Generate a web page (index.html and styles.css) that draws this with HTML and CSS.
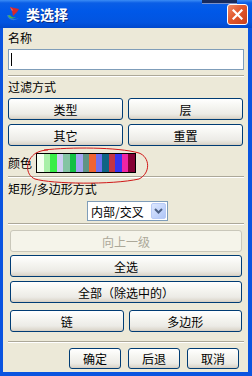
FILE: index.html
```html
<!DOCTYPE html>
<html lang="zh-CN">
<head>
    <meta charset="UTF-8">
    <title>类选择</title>
    <link rel="stylesheet" href="styles.css">
</head>
<body>
    <div class="window">
        <header class="titlebar">
            <svg class="app-icon" width="16" height="16" viewBox="0 0 16 16">
                <path d="M2 9 C3 14, 9 16, 14 12 C10 14, 5 13, 4 9 Z" fill="#2f7ad8"/>
                <path d="M3 10 C5 13, 9 13, 11 11 C8 12, 6 11, 5 9 Z" fill="#49b84a"/>
                <path d="M5 1 L14 3 L12 6 L8 10 L7 5 Z" fill="#d8282a"/>
                <path d="M5 1 L8 4 L7 5 Z" fill="#f07070"/>
            </svg>
            <span class="title-text">类选择</span>
            <span class="behind-strip"></span>
            <span class="close-btn">
                <svg width="11" height="11" viewBox="0 0 11 11">
                    <path d="M1.5 1.5 L9.5 9.5 M9.5 1.5 L1.5 9.5" stroke="#fff" stroke-width="2.2" stroke-linecap="square"/>
                </svg>
            </span>
        </header>
        <main class="dialog">
            <div class="label label-name">名称</div>
            <div class="text-input"><span class="caret"></span></div>
            <div class="sep sep-1"></div>

            <div class="label label-filter">过滤方式</div>
            <div class="btn-grid">
                <button class="btn">类型</button>
                <button class="btn">层</button>
                <button class="btn">其它</button>
                <button class="btn">重置</button>
            </div>
            <div class="color-row">
                <span class="label">颜色</span>
                <div class="color-strip">
                    <span style="background:#f4fff0"></span>
                    <span style="background:#a8f0a8"></span>
                    <span style="background:#38ee48"></span>
                    <span style="background:#cdcdf2"></span>
                    <span style="background:#84c4a4"></span>
                    <span style="background:#14c044"></span>
                    <span style="background:#a4a4f0"></span>
                    <span style="background:#609484"></span>
                    <span style="background:#f06434"></span>
                    <span style="background:#7070f0"></span>
                    <span style="background:#106484"></span>
                    <span style="background:#c43444"></span>
                    <span style="background:#3434f0"></span>
                    <span style="background:#f024a4"></span>
                    <span style="background:#840034"></span>
                </div>
            </div>
            <div class="sep sep-2"></div>

            <div class="label label-rect">矩形/多边形方式</div>
            <div class="select-row">
                <div class="select">
                    <span class="select-text">内部/交叉</span>
                    <span class="select-arrow">
                        <svg width="9" height="6" viewBox="0 0 9 6">
                            <path d="M1 1 L4.5 4.5 L8 1" stroke="#4d6185" stroke-width="2" fill="none"/>
                        </svg>
                    </span>
                </div>
            </div>
            <div class="sep sep-3"></div>

            <div class="actions">
                <button class="btn btn-wide btn-disabled">向上一级</button>
                <button class="btn btn-wide btn-all">全选</button>
                <button class="btn btn-wide btn-except">全部（除选中的）</button>
                <div class="btn-pair">
                    <button class="btn">链</button>
                    <button class="btn">多边形</button>
                </div>
            </div>
            <div class="sep sep-4"></div>

            <div class="footer">
                <button class="btn btn-small">确定</button>
                <button class="btn btn-small">后退</button>
                <button class="btn btn-small">取消</button>
            </div>
        </main>
        <svg class="mark" width="252" height="376" viewBox="0 0 252 376">
            <path d="M44 150 C70 147, 118 147, 139 153 C150 157, 151 173, 139 179 C112 185, 52 184, 35 179 C25 175, 25 160, 36 153 C40 151, 44 150, 48 150" fill="none" stroke="#d01818" stroke-width="1"/>
        </svg>
    </div>
</body>
</html>
```

FILE: styles.css
```css
body {
    margin: 0;
    padding: 0;
    font-family: "Noto Sans CJK SC", "Noto Sans", sans-serif;
    font-size: 12px;
    color: #000;
}
.window {
    position: relative;
    width: 252px;
    height: 376px;
    background: #0a54e0;
    display: flex;
    flex-direction: column;
    overflow: hidden;
}
.titlebar {
    position: relative;
    height: 28px;
    display: flex;
    align-items: center;
    padding: 0 4px 0 5px;
    background: linear-gradient(#3b8cf5 0, #0a5ee6 3px, #0058e8 40%, #0254e0 80%, #0048cc 100%);
}
.app-icon {
    margin-right: 5px;
}
.title-text {
    color: #fff;
    font-weight: bold;
    font-size: 14px;
    text-shadow: 1px 1px 0 #0a2a80;
    letter-spacing: 0;
}
.behind-strip {
    position: absolute;
    left: 202px;
    top: 0;
    width: 35px;
    height: 3px;
    background: #172a5c;
    border-bottom: 1px solid #7a90c8;
}
.close-btn {
    margin-left: auto;
    width: 19px;
    height: 19px;
    border: 1px solid #fff;
    border-radius: 3px;
    background: linear-gradient(135deg, #f08a68 0, #e2582c 45%, #c8401c 100%);
    display: flex;
    align-items: center;
    justify-content: center;
}
.dialog {
    flex: 1;
    margin: 0 4px 4px 3px;
    padding: 0 4px 0 5px;
    background: #ece9d8;
    display: flex;
    flex-direction: column;
}
.label {
    height: 16px;
    line-height: 16px;
}
.label-name {
    margin-top: 2px;
}
.text-input {
    margin-top: 3px;
    height: 19px;
    border: 1px solid #7f9db9;
    background: #fff;
    display: flex;
    align-items: center;
    padding-left: 2px;
}
.caret {
    width: 1px;
    height: 13px;
    background: #000;
}
.sep {
    height: 0;
    border-top: 1px solid #aca899;
    border-bottom: 1px solid #fff;
}
.sep-1 {
    margin-top: 5px;
}
.label-filter {
    margin-top: 2px;
}
.btn {
    font-family: "Noto Sans CJK SC", "Noto Sans", sans-serif;
    font-size: 12px;
    color: #000;
    height: 22px;
    padding: 0;
    border: 1px solid #003c74;
    border-radius: 3px;
    background: linear-gradient(#ffffff 0%, #f6f6f2 35%, #ecebe6 75%, #d8d2c6 100%);
    box-shadow: inset 0 -1px 0 #d6d0c5;
}
.btn-grid {
    margin-top: 3px;
    margin-right: 1px;
    display: grid;
    grid-template-columns: 1fr 1fr;
    gap: 4px 5px;
}
.color-row {
    margin-top: 7px;
    height: 20px;
    display: flex;
    align-items: center;
}
.color-strip {
    margin-left: 4px;
    width: 98px;
    height: 18px;
    border: 1px solid #000;
    display: flex;
}
.color-strip span {
    flex: 1;
}
.sep-2 {
    margin-top: 3px;
}
.label-rect {
    margin-top: 3px;
}
.select-row {
    margin-top: 4px;
    display: flex;
    padding-left: 79px;
}
.select {
    width: 79px;
    height: 18px;
    border: 1px solid #7f9db9;
    background: #fff;
    display: flex;
    align-items: center;
}
.select-text {
    flex: 1;
    padding-left: 3px;
}
.select-arrow {
    width: 15px;
    height: 16px;
    margin-right: 1px;
    border: 1px solid #b8cbf7;
    border-radius: 2px;
    box-sizing: border-box;
    background: linear-gradient(135deg, #dde8fe 0, #c1d3fb 60%, #b0c6f6 100%);
    display: flex;
    align-items: center;
    justify-content: center;
}
.sep-3 {
    margin-top: 2px;
}
.actions {
    padding: 0 2px;
    display: flex;
    flex-direction: column;
}
.btn-wide {
    width: 100%;
}
.btn-disabled {
    margin-top: 5px;
    color: #aca899;
    border-color: #c9c7ba;
    background: #f5f4ea;
    box-shadow: none;
}
.btn-all {
    margin-top: 3px;
}
.btn-except {
    margin-top: 4px;
}
.btn-pair {
    margin-top: 7px;
    display: grid;
    grid-template-columns: 1fr 1fr;
    gap: 5px;
}
.sep-4 {
    margin-top: 9px;
}
.footer {
    margin-top: 5px;
    padding-right: 5px;
    display: flex;
    justify-content: flex-end;
    gap: 7px;
}
.btn-small {
    width: 52px;
    height: 21px;
}
.mark {
    position: absolute;
    left: 0;
    top: 0;
    pointer-events: none;
}
```
